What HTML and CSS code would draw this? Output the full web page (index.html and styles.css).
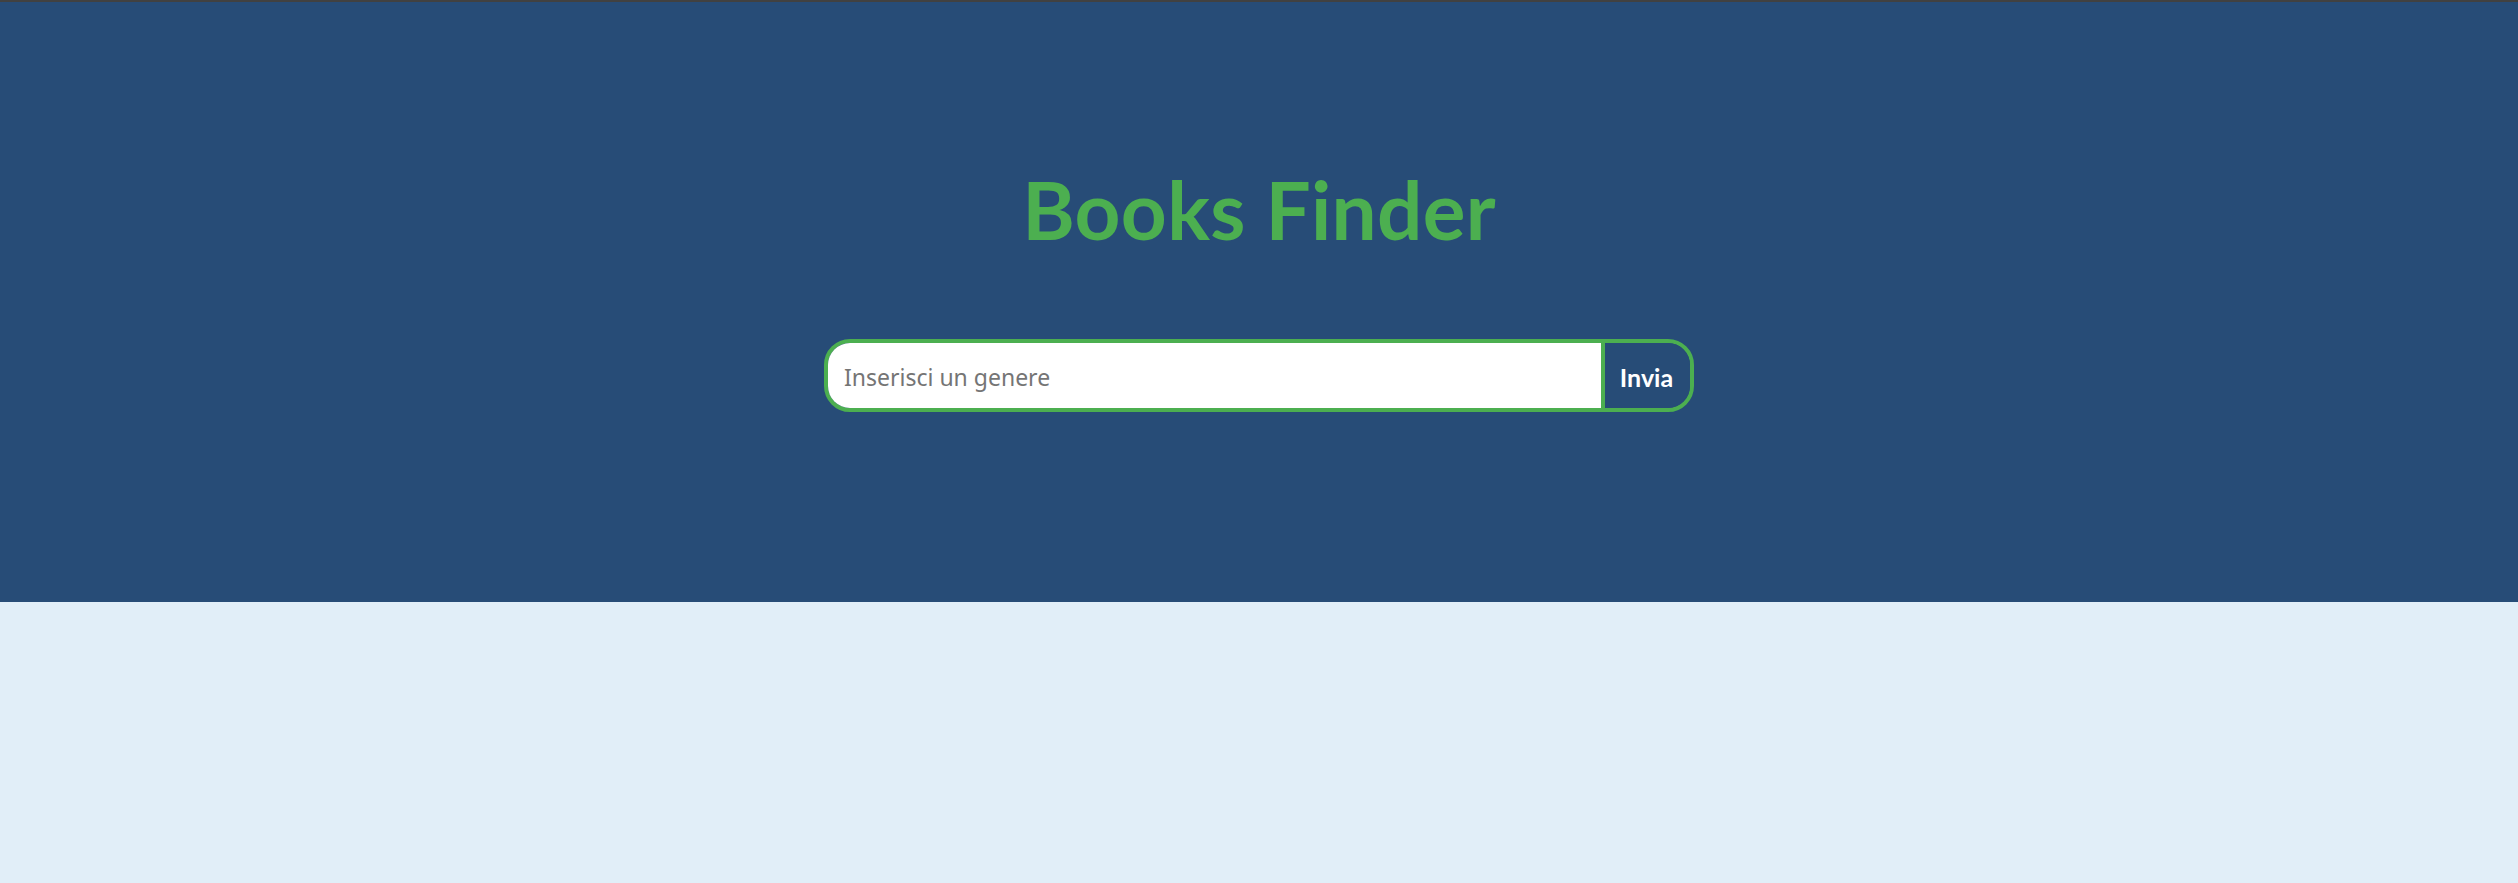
FILE: index.html
```html
<!DOCTYPE html>
<html lang="it">
<head>
<meta charset="utf-8">
<title>Books Finder</title>
<link rel="stylesheet" href="styles.css">
</head>
<body>
<div class="topline"></div>
<header class="hero">
  <h1 class="title">Books Finder</h1>
  <form class="search" onsubmit="return false;">
    <input class="search-input" type="text" placeholder="Inserisci un genere">
    <button class="search-btn" type="submit">Invia</button>
  </form>
</header>
<main class="content"></main>
</body>
</html>
```

FILE: styles.css
```css
html, body {
  margin: 0;
  padding: 0;
  height: 100%;
}
body {
  background: #e1eef8;
  font-family: "Noto Sans", "Open Sans", sans-serif;
}
.topline {
  height: 2px;
  background: #414141;
}
.hero {
  height: 600px;
  background: #274c77;
  display: flex;
  flex-direction: column;
  align-items: center;
  padding-top: 167px;
  box-sizing: border-box;
}
.title {
  margin: 0;
  font-family: "Lato", sans-serif;
  font-weight: 700;
  font-size: 80px;
  line-height: 1;
  color: #4caf50;
  letter-spacing: 0.3px;
}
.search {
  margin-top: 90px;
  width: 870px;
  height: 73px;
  box-sizing: border-box;
  border: 4px solid #4caf50;
  border-radius: 26px;
  overflow: hidden;
  display: flex;
}
.search-input {
  flex: 1;
  border: none;
  border-right: 4px solid #4caf50;
  padding: 2px 0 0 16px;
  margin: 0;
  font-family: "Noto Sans", "Open Sans", sans-serif;
  font-size: 23px;
  color: #333;
  background: #fff;
  outline: none;
}
.search-input::placeholder {
  color: #757575;
}
.search-btn {
  width: 85px;
  border: none;
  margin: 0;
  padding: 2px 2px 0 0;
  background: #274c77;
  color: #fff;
  font-family: "Lato", sans-serif;
  font-weight: 700;
  font-size: 25px;
  cursor: pointer;
}
.content {
  min-height: 281px;
}
```
